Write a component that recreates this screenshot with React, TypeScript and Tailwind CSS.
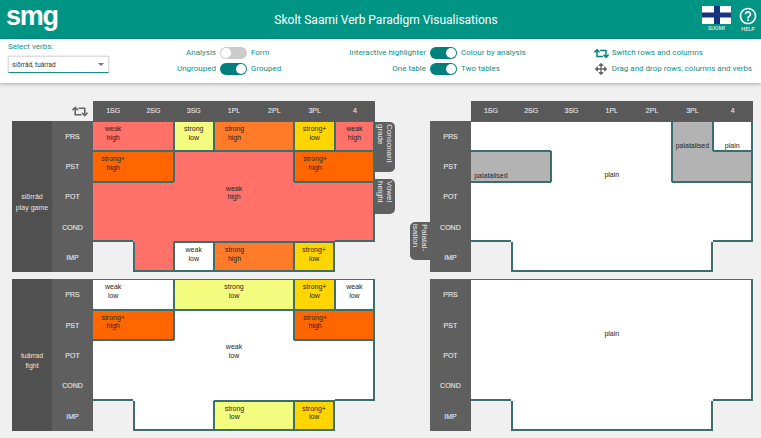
import React from "react";
import { FaRetweet, FaArrowsAlt } from "react-icons/fa";
import { MdHelpOutline } from "react-icons/md";

type Region = { bg: string; lines: string[]; at: [number, number] };
type Spec = { m: string[]; regions: Record<string, Region> };

const WH = "bg-[#ff7169]";
const SL = "bg-[#f3fc7f]";
const SH = "bg-[#ff7b2a]";
const PL = "bg-[#ffd500]";
const PH = "bg-[#ff6600]";
const W = "bg-white";
const G = "bg-[#b3b3b3]";

const t1: Spec = {
  m: ["AABCCDE", "FFGGGHH", "GGGGGGG", "GGGGGGG", ".GIJJK."],
  regions: {
    A: { bg: WH, lines: ["weak", "high"], at: [0, 0] },
    B: { bg: SL, lines: ["strong", "low"], at: [0, 2] },
    C: { bg: SH, lines: ["strong", "high"], at: [0, 3] },
    D: { bg: PL, lines: ["strong+", "low"], at: [0, 5] },
    E: { bg: WH, lines: ["weak", "high"], at: [0, 6] },
    F: { bg: PH, lines: ["strong+", "high"], at: [1, 0] },
    G: { bg: WH, lines: ["weak", "high"], at: [2, 3] },
    H: { bg: PH, lines: ["strong+", "high"], at: [1, 5] },
    I: { bg: W, lines: ["weak", "low"], at: [4, 2] },
    J: { bg: SH, lines: ["strong", "high"], at: [4, 3] },
    K: { bg: PL, lines: ["strong+", "low"], at: [4, 5] },
  },
};
const t2: Spec = {
  m: ["AABBBCD", "EEGGGHH", "GGGGGGG", "GGGGGGG", ".GGJJK."],
  regions: {
    A: { bg: W, lines: ["weak", "low"], at: [0, 0] },
    B: { bg: SL, lines: ["strong", "low"], at: [0, 3] },
    C: { bg: PL, lines: ["strong+", "low"], at: [0, 5] },
    D: { bg: W, lines: ["weak", "low"], at: [0, 6] },
    E: { bg: PH, lines: ["strong+", "high"], at: [1, 0] },
    G: { bg: W, lines: ["weak", "low"], at: [2, 3] },
    H: { bg: PH, lines: ["strong+", "high"], at: [1, 5] },
    J: { bg: SL, lines: ["strong", "low"], at: [4, 3] },
    K: { bg: PL, lines: ["strong+", "low"], at: [4, 5] },
  },
};
const t3: Spec = {
  m: ["PPPPPQR", "SSPPPQQ", "PPPPPPP", "PPPPPPP", ".PPPPP."],
  regions: {
    P: { bg: W, lines: ["", "", "plain"], at: [1, 3] },
    Q: { bg: G, lines: ["", "", "palatalised"], at: [0, 5] },
    R: { bg: W, lines: ["", "", "plain"], at: [0, 6] },
    S: { bg: G, lines: ["", "", "palatalised"], at: [1, 0] },
  },
};
const t4: Spec = {
  m: ["PPPPPPP", "PPPPPPP", "PPPPPPP", "PPPPPPP", ".PPPPP."],
  regions: { P: { bg: W, lines: ["", "", "plain"], at: [1, 3] } },
};

const MOODS = ["PRS", "PST", "POT", "COND", "IMP"];
const PERSONS = ["1SG", "2SG", "3SG", "1PL", "2PL", "3PL", "4"];

function Cell({ spec, r, c }: { spec: Spec; r: number; c: number }) {
  const id = spec.m[r][c];
  if (id === ".") return <div />;
  const get = (y: number, x: number) => spec.m[y]?.[x] ?? ".";
  const reg = spec.regions[id];
  const diff = (y: number, x: number) => get(y, x) !== id;
  const outer = (y: number, x: number) => get(y, x) === ".";
  const top = diff(r - 1, c);
  const bottom = diff(r + 1, c);
  const left = c > 0 && diff(r, c - 1);
  const right = diff(r, c + 1);
  const cls = [
    "relative min-w-0 border-[#3b6f6d] text-center",
    reg.bg,
    top ? "border-t" : "",
    bottom ? (outer(r + 1, c) ? "border-b-2" : "border-b") : "",
    left ? (outer(r, c - 1) ? "border-l-2" : "border-l") : "",
    right ? (outer(r, c + 1) ? "border-r-2" : "border-r") : "",
  ].join(" ");
  const show = reg.at[0] === r && reg.at[1] === c;
  return (
    <div className={cls}>
      {show && (
        <div className="absolute left-[-10px] right-[-10px] top-[3px] text-[7px] leading-[8.5px] text-[#262626]">
          {reg.lines.map((l, i) => (
            <div key={i} className="h-[8.5px] whitespace-nowrap">
              {l}
            </div>
          ))}
        </div>
      )}
    </div>
  );
}

function Table({
  spec,
  verb,
  header,
  corner,
  children,
}: {
  spec: Spec;
  verb?: string[];
  header?: boolean;
  corner?: boolean;
  children?: React.ReactNode;
}) {
  return (
    <div
      className={
        "relative grid font-['Liberation_Sans',sans-serif] " +
        (verb
          ? "grid-cols-[40px_41px_repeat(7,40.3px)] "
          : "grid-cols-[40.7px_repeat(7,40.3px)] ") +
        (header
          ? "grid-rows-[20px_repeat(5,30.3px)]"
          : "grid-rows-[repeat(5,30.3px)]")
      }
    >
      {header && (
        <>
          <div className={verb ? "col-span-2 flex items-center justify-end pr-[5px]" : ""}>
            {corner && <FaRetweet className="h-[15px] w-[16px] text-[#666666]" />}
          </div>
          {PERSONS.map((p) => (
            <div
              key={p}
              className="flex items-center justify-center bg-[#595959] text-[7px] text-[#e8e8e8]"
            >
              <span className="[-webkit-text-stroke:0.1px_#e8e8e8]">{p}</span>
            </div>
          ))}
        </>
      )}
      {MOODS.map((mood, r) => (
        <React.Fragment key={mood}>
          {verb && r === 0 && (
            <div className="row-span-5 flex flex-col items-center justify-center bg-[#505050] pt-[12px] text-[7px] leading-[10.5px] text-[#e4e4e4]">
              {verb.map((v) => (
                <div key={v}>{v}</div>
              ))}
            </div>
          )}
          <div className="flex items-center justify-center bg-[#5f5f5f] pt-[2px] text-[7px] text-[#e8e8e8]">
            <span className="[-webkit-text-stroke:0.1px_#e8e8e8]">{mood}</span>
          </div>
          {PERSONS.map((_, c) => (
            <Cell key={c} spec={spec} r={r} c={c} />
          ))}
        </React.Fragment>
      ))}
      {children}
    </div>
  );
}

function Toggle({ on }: { on: boolean }) {
  return (
    <div
      className={
        "flex h-[12px] w-[27px] items-center rounded-full px-[1px] " +
        (on ? "justify-end bg-[#00807c]" : "justify-start bg-[#cccccc]")
      }
    >
      <div className="h-[10px] w-[10px] rounded-full bg-white" />
    </div>
  );
}

function ToggleRow({ l, r, on }: { l: string; r: string; on: boolean }) {
  return (
    <>
      <span className="justify-self-end">{l}</span>
      <Toggle on={on} />
      <span>{r}</span>
    </>
  );
}

function SideTab({ cls, children }: { cls: string; children: React.ReactNode }) {
  return (
    <div
      className={
        "absolute flex w-[20px] items-center bg-[#5f5f5f] pt-[2px] text-[8px] leading-[9px] text-[#e8e8e8] [writing-mode:vertical-rl] " +
        cls
      }
    >
      {children}
    </div>
  );
}

export default function App() {
  return (
    <div className="h-[438px] w-[761px] overflow-hidden bg-[#f0f0f0] font-['Roboto',sans-serif]">
      <header className="grid h-[39px] grid-cols-[1fr_auto_1fr] items-center bg-[#009485] pl-[6px] pr-[3px] text-white">
        <div className="mb-[7px] font-['Liberation_Sans',sans-serif] text-[27px] font-bold leading-none tracking-[-1.2px]">
          smg
        </div>
        <h1 className="ml-[8px] text-[12px] font-normal">Skolt Saami Verb Paradigm Visualisations</h1>
        <div className="mb-[1px] flex items-start justify-end gap-[7px]">
          <div className="flex flex-col items-center">
            <svg viewBox="0 0 29 18" className="h-[18px] w-[29px]">
              <rect width="29" height="18" fill="#ffffff" />
              <rect x="12" width="6" height="18" fill="#17357f" />
              <rect y="6.5" width="29" height="5" fill="#17357f" />
            </svg>
            <span className="mt-[1px] text-[5.5px] leading-[7px]">SUOMI</span>
          </div>
          <div className="flex flex-col items-center">
            <MdHelpOutline className="h-[20px] w-[20px]" />
            <span className="text-[5.5px] leading-[6px]">HELP</span>
          </div>
        </div>
      </header>

      <div className="relative flex h-[44px] items-start gap-[68px] whitespace-nowrap bg-white pl-[8px] text-[8px] leading-[16px] text-[#128f84] shadow-[0_1px_4px_rgba(0,0,0,0.3)]">
        <div className="w-[101px] shrink-0">
          <div className="mt-[3px] text-[8px] leading-[10px]">Select verbs:</div>
          <div className="mt-[4px] flex h-[17px] items-center justify-between border border-[#dddddd] border-b-[#128f84] pl-[3px] pr-[4px] text-[6.5px] text-[#333333] shadow-[0_0_2px_rgba(0,0,0,0.2)]">
            <span>siõrrâd, tuârrad</span>
            <span className="h-0 w-0 border-x-[3px] border-t-[3px] border-x-transparent border-t-[#777777]" />
          </div>
        </div>
        <div className="mt-[6px] grid shrink-0 grid-cols-[auto_27px_auto] items-center gap-x-[4px]">
          <ToggleRow l="Analysis" r="Form" on={false} />
          <ToggleRow l="Ungrouped" r="Grouped" on />
        </div>
        <div className="mt-[6px] grid shrink-0 grid-cols-[auto_27px_auto] items-center gap-x-[4px]">
          <ToggleRow l="Interactive highlighter" r="Colour by analysis" on />
          <ToggleRow l="One table" r="Two tables" on />
        </div>
        <div className="mt-[6px] grid shrink-0 grid-cols-[14px_auto] items-center gap-x-[4px]">
          <FaRetweet className="h-[13px] w-[15px] text-[#00807c]" />
          <span>Switch rows and columns</span>
          <FaArrowsAlt className="ml-[1px] h-[12px] w-[12px] text-[#666666]" />
          <span>Drag and drop rows, columns and verbs</span>
        </div>
      </div>

      <main className="ml-[12px] mt-[18px] flex gap-[55px]">
        <div className="flex flex-col gap-[7px]">
          <Table spec={t1} verb={["siõrrâd", "play game"]} header corner>
            <SideTab cls="left-[363px] top-[21px] h-[50px] rounded-r-[5px]">
              <span>
                Consonant
                <br />
                grade
              </span>
            </SideTab>
            <SideTab cls="left-[363px] top-[78px] h-[35px] rounded-r-[5px]">
              <span>
                Vowel
                <br />
                height
              </span>
            </SideTab>
            <SideTab cls="left-[398px] top-[121px] h-[38px] rounded-l-[5px]">
              <span>
                Palatal-
                <br />
                isation
              </span>
            </SideTab>
          </Table>
          <Table spec={t2} verb={["tuârrad", "fight"]} />
        </div>
        <div className="flex flex-col gap-[7px]">
          <Table spec={t3} header />
          <Table spec={t4} />
        </div>
      </main>
    </div>
  );
}
